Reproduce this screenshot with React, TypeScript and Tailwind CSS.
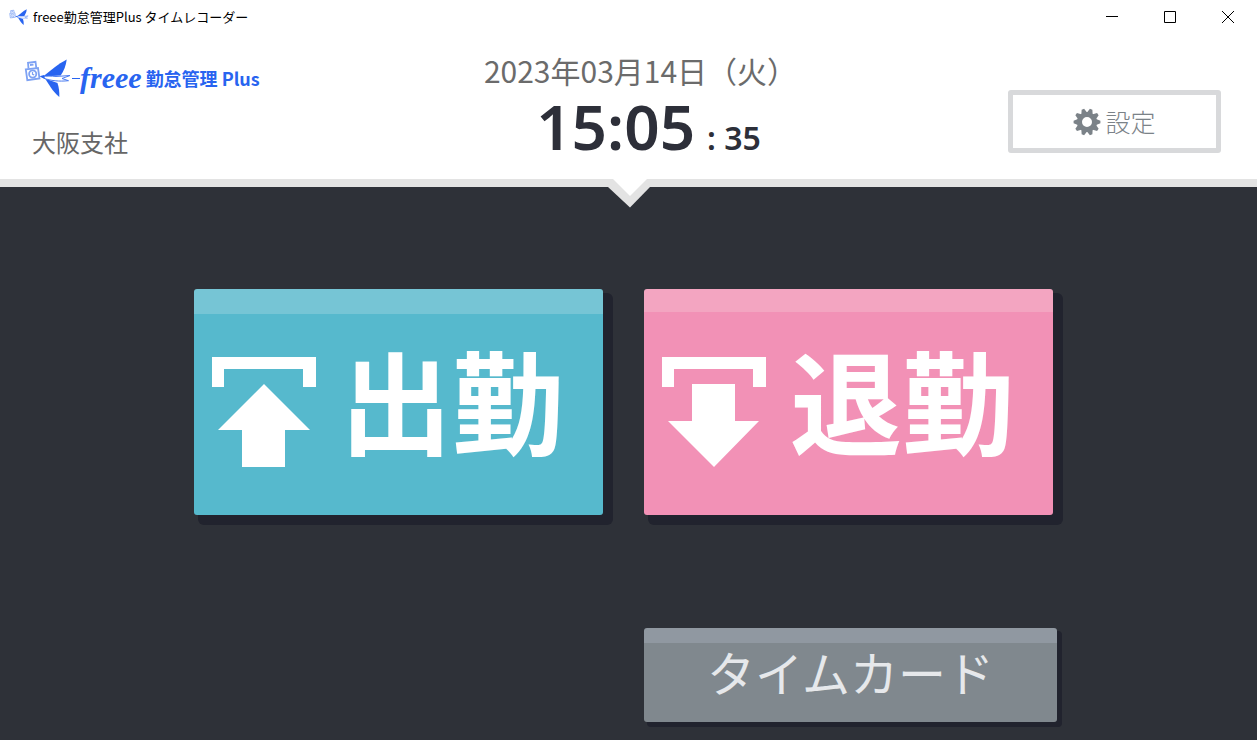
import type { ReactNode } from 'react';

function Swallow({ className }: { className: string }) {
  return (
    <svg viewBox="0 0 48 40" className={className} fill="none" aria-hidden="true">
      <g stroke="#7ea2f3" strokeWidth="1.800">
        <path d="M1.800 11.300 14 10l1.500 10.500-12.200 1.700z" />
        <path d="M4.500 10.500 4 4.800l7.500-1 .8 6M6 7l3.500-.4" />
        <circle cx="8.700" cy="16" r="3.600" />
        <path d="M8.500 14v2.300l1.700.6" strokeWidth="1.200" />
      </g>
      <path d="M19 18.500 31 9c3-2.300 7-5 11.700-7.500-.7 6-2.700 11-6 16z" fill="#2864f0" />
      <path d="M21 20.500 33.500 25c1.500 4.500 2 9 1.800 14-4-3.500-6.500-6.500-8.600-9.700z" fill="#2864f0" />
      <path d="M17.500 18.800c5-1 10-.8 14.500-.3l14-1-8 3 6.500 2.200c-9 1-18.500 0-24.500-2.500z" fill="#ffffff" stroke="#4a7cf2" strokeWidth="1" />
      <path d="M15.500 18.200 20 17l1 4z" fill="#2864f0" />
    </svg>
  );
}

function Gear() {
  const teeth = [0, 36, 72, 108, 144, 180, 216, 252, 288, 324];
  return (
    <svg viewBox="0 0 28 28" className="size-7" aria-hidden="true">
      <circle cx="14" cy="14" r="7.500" fill="none" stroke="#7b8288" strokeWidth="5" />
      {teeth.map((a) => (
        <path key={a} d="M10.800 5.500 12.700.6h2.600l1.900 4.900z" fill="#7b8288" transform={`rotate(${a + 18} 14 14)`} />
      ))}
    </svg>
  );
}

function StampIcon({ direction }: { direction: 'in' | 'out' }) {
  return (
    <svg viewBox="0 0 104 110" className="h-[110px] w-[104px] shrink-0" fill="#ffffff" aria-hidden="true">
      <path d="M0 0h104v30H91V12H12v18H0z" />
      {direction === 'in' ? (
        <path d="M52 27 98 73H73v37H30V73H6z" />
      ) : (
        <path d="M30 27h43v37h24L52 110 6 64h24z" />
      )}
    </svg>
  );
}

function StampButton({ direction, className, children }: { direction: 'in' | 'out'; className: string; children: ReactNode }) {
  return (
    <button
      type="button"
      className={`flex h-[226px] items-center gap-6 rounded-[3px] pt-5 pl-[18px] text-[112px] leading-none font-bold whitespace-nowrap text-white shadow-[7px_7px_0_3px_#21232e] ${className}`}
    >
      <StampIcon direction={direction} />
      <span className="pb-7">{children}</span>
    </button>
  );
}

export default function App() {
  return (
    <div className="flex min-h-screen flex-col bg-[#2e3138] font-['Noto_Sans_CJK_JP',sans-serif]">
      <header className="relative border-b-8 border-[#e3e3e3] bg-white">
        <div className="flex h-[34px] items-center justify-between pl-[9px] text-black">
          <div className="flex items-center gap-1">
            <Swallow className="h-5 w-5" />
            <h1 className="text-[13px]">freee勤怠管理Plus タイムレコーダー</h1>
          </div>
          <div className="flex h-full">
            <button type="button" aria-label="最小化" className="flex w-[58px] items-center justify-center">
              <svg className="size-3" viewBox="0 0 12 12" stroke="currentColor"><path d="M0 5.500h12" /></svg>
            </button>
            <button type="button" aria-label="最大化" className="flex w-[58px] items-center justify-center">
              <svg className="size-3" viewBox="0 0 12 12" fill="none" stroke="currentColor"><path d="M.5.5h11v11H.5z" /></svg>
            </button>
            <button type="button" aria-label="閉じる" className="flex w-[58px] items-center justify-center">
              <svg className="size-3" viewBox="0 0 12 12" stroke="currentColor"><path d="m0 0 12 12M12 0 0 12" /></svg>
            </button>
          </div>
        </div>

        <div className="grid h-[145px] grid-cols-[1fr_auto_1fr] items-start pr-9 pl-6">
          <div className="pt-6">
            <div className="flex h-10 items-center whitespace-nowrap text-[#2864f0]">
              <Swallow className="h-10 w-12" />
              <span className="h-px w-2 bg-[#2864f0]" />
              <span className="font-['Liberation_Serif',serif] text-[30px] leading-10 font-bold italic">freee</span>
              <span className="pl-1 text-[18px] font-bold">勤怠管理</span>
              <span className="pl-1 text-[18px] font-bold">Plus</span>
            </div>
            <p className="pt-6 pl-2 text-[24px] leading-10 text-[#666666]">大阪支社</p>
          </div>

          <div className="flex flex-col items-center pt-4 pl-9">
            <p className="text-[30px] leading-10 whitespace-nowrap text-[#6b6b6b]">2023年03月14日（火）</p>
            <p className="flex items-baseline gap-3 pl-4 font-['Noto_Sans',sans-serif] font-semibold text-[#2d2f39]">
              <span className="text-[62px] leading-[72px]">15:05</span>
              <span className="text-[32px] leading-none">: 35</span>
            </p>
          </div>

          <button
            type="button"
            className="mt-14 flex h-[63px] w-[213px] items-center justify-center gap-1 justify-self-end rounded-[3px] border-[5px] border-[#d8d9db] bg-white text-[25px] font-light text-[#7b8288]"
          >
            <Gear />
            設定
          </button>
        </div>

        <svg viewBox="0 0 42 29" className="absolute top-full left-1/2 h-[29px] w-[42px] -translate-x-1/2" aria-hidden="true">
          <path d="M0 8V0h42v8L22 28.500z" fill="#e3e3e3" />
          <path d="M5 0h34L22 17z" fill="#ffffff" />
        </svg>
      </header>

      <main className="mx-auto grid w-full max-w-[869px] grid-cols-[409px_413px] gap-x-[41px] gap-y-[113px] pt-[102px] pb-[18px]">
        <StampButton direction="in" className="w-[409px] bg-[linear-gradient(#76c5d5_25px,#56b9cd_25px)]">出勤</StampButton>
        <StampButton direction="out" className="w-[409px] bg-[linear-gradient(#f3a5c1_23px,#f291b6_23px)]">退勤</StampButton>
        <button
          type="button"
          className="col-start-2 h-[94px] rounded-[3px] bg-[linear-gradient(#9098a1_15px,#80888e_15px)] pb-2 text-[48px] leading-none whitespace-nowrap text-[#e6e8eb] shadow-[4px_4px_0_1px_#21232e]"
        >
          タイムカード
        </button>
      </main>
    </div>
  );
}
